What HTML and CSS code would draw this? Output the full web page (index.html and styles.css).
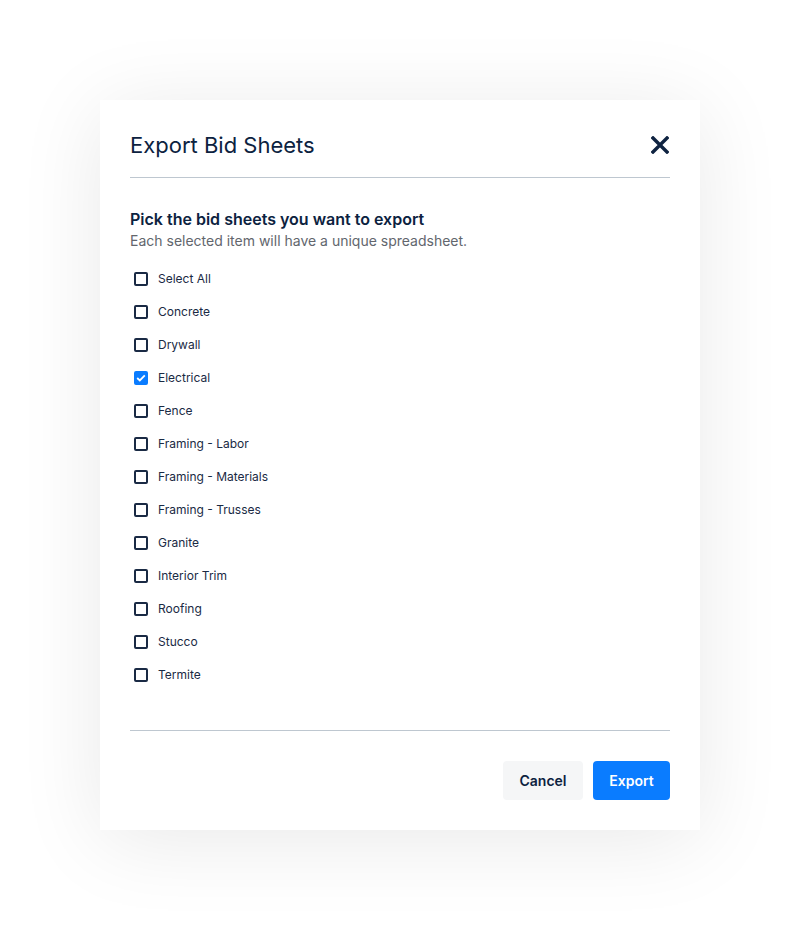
FILE: index.html
```html
<html><head>
<link rel="stylesheet" href="styles.css">
</head><body>
<div class="modal">
  <div class="modal-header">
    <h2 class="modal-title">Export Bid Sheets</h2>
    <svg class="close" width="18" height="18" viewBox="0 0 18 18"><path d="M2 2 L16 16 M16 2 L2 16" stroke="#0f2341" stroke-width="3.4" stroke-linecap="square"/></svg>
  </div>
  <div class="modal-body">
    <h3 class="pick-title">Pick the bid sheets you want to export</h3>
    <p class="pick-sub">Each selected item will have a unique spreadsheet.</p>
    <ul class="sheet-list">
      <li><span class="box"></span>Select All</li>
      <li><span class="box"></span>Concrete</li>
      <li><span class="box"></span>Drywall</li>
      <li><span class="box checked"><svg width="10" height="8" viewBox="0 0 10 8"><path d="M1.2 4 L3.8 6.4 L8.8 1.4" fill="none" stroke="#fff" stroke-width="1.8"/></svg></span>Electrical</li>
      <li><span class="box"></span>Fence</li>
      <li><span class="box"></span>Framing - Labor</li>
      <li><span class="box"></span>Framing - Materials</li>
      <li><span class="box"></span>Framing - Trusses</li>
      <li><span class="box"></span>Granite</li>
      <li><span class="box"></span>Interior Trim</li>
      <li><span class="box"></span>Roofing</li>
      <li><span class="box"></span>Stucco</li>
      <li><span class="box"></span>Termite</li>
    </ul>
  </div>
  <div class="modal-footer">
    <button class="btn btn-cancel">Cancel</button>
    <button class="btn btn-export">Export</button>
  </div>
</div>
</body></html>
```

FILE: styles.css
```css
body {
    margin: 0;
    padding: 100px 0;
    background-color: #fff;
    font-family: Inter, "Noto Sans", sans-serif;
    color: #0f2341;
}
.modal {
    width: 600px;
    margin: 0 auto;
    background-color: #fff;
    box-shadow: 0 10px 80px rgba(0, 0, 0, 0.09);
    padding: 0 30px 30px 30px;
    box-sizing: border-box;
}
.modal-header {
    display: flex;
    align-items: center;
    justify-content: space-between;
    padding: 30px 0 17px 0;
    border-bottom: 1px solid #bec7d0;
}
.modal-title {
    margin: 0;
    font-size: 22px;
    font-weight: 400;
    line-height: 30px;
    color: #0c2240;
}
.close {
    display: block;
    margin-right: 1px;
}
.modal-body {
    padding-top: 30px;
}
.pick-title {
    margin: 0;
    font-size: 16px;
    font-weight: 600;
    line-height: 22px;
    color: #0c2240;
}
.pick-sub {
    margin: 1px 0 0 0;
    font-size: 14px;
    line-height: 20px;
    color: #62666d;
}
.sheet-list {
    list-style: none;
    margin: 11px 0 0 0;
    padding: 0;
}
.sheet-list li {
    display: flex;
    align-items: center;
    height: 33px;
    font-size: 12px;
    color: #1a2a44;
}
.box {
    width: 14px;
    height: 14px;
    box-sizing: border-box;
    border: 2px solid #1a2a44;
    border-radius: 2px;
    margin: 0 10px 0 4px;
    display: flex;
    align-items: center;
    justify-content: center;
}
.box.checked {
    background-color: #0a7cff;
    border-color: #0a7cff;
}
.modal-footer {
    margin-top: 39px;
    border-top: 1px solid #bec7d0;
    padding-top: 30px;
    display: flex;
    justify-content: flex-end;
    gap: 10px;
}
.btn {
    height: 39px;
    border: none;
    border-radius: 4px;
    font-family: Inter, "Noto Sans", sans-serif;
    font-size: 14px;
    font-weight: 600;
    padding: 0;
}
.btn-cancel {
    width: 80px;
    background-color: #f5f6f7;
    color: #0c2240;
}
.btn-export {
    width: 77px;
    background-color: #0a7cff;
    color: #fff;
}
```
